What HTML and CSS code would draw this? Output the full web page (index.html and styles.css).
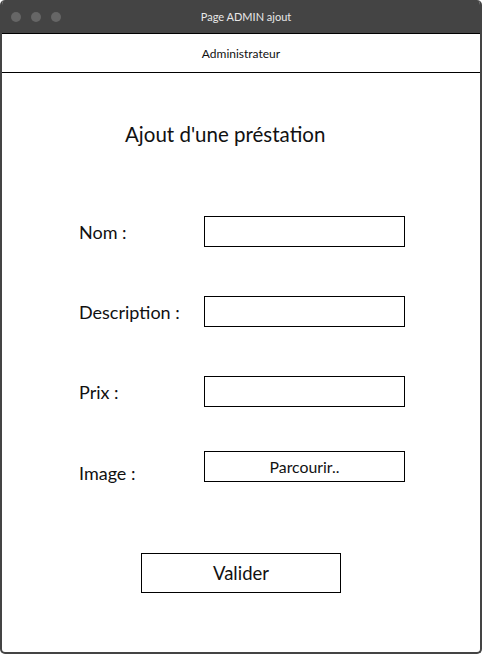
FILE: index.html
```html
<!DOCTYPE html>
<html lang="fr">
<head>
<meta charset="utf-8">
<title>Page ADMIN ajout</title>
<link rel="stylesheet" href="styles.css">
</head>
<body>
<div class="window">
  <div class="titlebar">
    <div class="dots"><span class="dot"></span><span class="dot"></span><span class="dot"></span></div>
    <div class="wintitle">Page ADMIN ajout</div>
    <div></div>
  </div>
  <div class="header">Administrateur</div>
  <div class="content">
    <h1 class="title">Ajout d'une préstation</h1>
    <div class="form">
      <div class="row"><span class="label">Nom :</span><span class="field"></span></div>
      <div class="row"><span class="label">Description :</span><span class="field"></span></div>
      <div class="row"><span class="label">Prix :</span><span class="field"></span></div>
      <div class="row row-image"><span class="label label-image">Image :</span><span class="field field-btn">Parcourir..</span></div>
    </div>
    <div class="submit">Valider</div>
  </div>
</div>
</body>
</html>
```
FILE: styles.css
```css
html, body {
  margin: 0;
  padding: 0;
  background: #fff;
}
body {
  font-family: Lato, "Liberation Sans", sans-serif;
  color: #111;
}
.window {
  width: 482px;
  height: 654px;
  box-sizing: border-box;
  border: 2px solid #444;
  border-top: none;
  border-radius: 5px;
  overflow: hidden;
  display: flex;
  flex-direction: column;
  background: #fff;
}
.titlebar {
  height: 33px;
  flex: none;
  background: #444;
  display: grid;
  grid-template-columns: 1fr auto 1fr;
  align-items: center;
  margin: 0 -2px;
}
.dots {
  display: flex;
  gap: 10px;
  padding-left: 11px;
}
.dot {
  width: 10px;
  height: 10px;
  border-radius: 50%;
  background: #666;
}
.wintitle {
  color: #e8e8e8;
  font-size: 11px;
  padding-left: 10px;
}
.header {
  height: 40px;
  flex: none;
  box-sizing: border-box;
  border-top: 1.5px solid #000;
  border-bottom: 1.5px solid #000;
  margin: 0 -2px;
  display: flex;
  align-items: center;
  justify-content: center;
  font-size: 12px;
  color: #111;
}
.content {
  padding-left: 77px;
}
.title {
  margin: 49px 0 0 46px;
  font-size: 20.5px;
  line-height: 24px;
  font-weight: normal;
}
.form {
  margin-top: 70px;
  display: flex;
  flex-direction: column;
  gap: 49px;
}
.row {
  display: flex;
  align-items: center;
  height: 31px;
}
.row-image {
  margin-top: -5px;
}
.label {
  width: 125px;
  font-size: 18px;
}
.label-image {
  padding-top: 12px;
}
.field {
  width: 201px;
  height: 31px;
  box-sizing: border-box;
  border: 1.5px solid #000;
}
.field-btn {
  display: flex;
  align-items: center;
  justify-content: center;
  font-size: 15.8px;
}
.submit {
  margin: 71px 0 0 62px;
  width: 200px;
  height: 40px;
  box-sizing: border-box;
  border: 1.5px solid #000;
  display: flex;
  align-items: center;
  justify-content: center;
  font-size: 18.5px;
}
```
